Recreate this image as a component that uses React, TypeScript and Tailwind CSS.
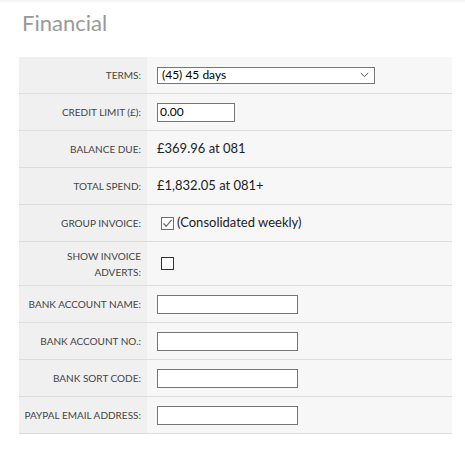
import { ReactNode } from "react";

type Row = {
  label: ReactNode;
  value: ReactNode;
  tall?: boolean;
};

const TextBox = ({ width, value }: { width: string; value?: string }) => (
  <div
    className={`${width} flex items-center h-[19px] px-[2px] bg-white border border-[#767676] text-[12px] text-black leading-none`}
  >
    {value}
  </div>
);

const Check = ({ checked }: { checked?: boolean }) => (
  <span
    className={`flex items-center justify-center w-[13px] h-[13px] ml-[4px] bg-white border ${
      checked ? "border-[#6d6d6d]" : "border-[#333]"
    }`}
  >
    {checked && (
      <svg width="11" height="11" viewBox="0 0 11 11" fill="none">
        <path d="M1.5 5.5 L4.2 8.3 L9.6 1.8" stroke="#6d6d6d" strokeWidth="1.3" />
      </svg>
    )}
  </span>
);

const rows: Row[] = [
  {
    label: "TERMS:",
    value: (
      <div className="flex items-center justify-between w-[218px] h-[17px] pl-[4px] pr-[5px] bg-white border border-[#767676] text-[12px] text-black leading-none">
        <span>(45) 45 days</span>
        <svg width="9" height="6" viewBox="0 0 9 6" fill="none">
          <path d="M0.8 1 L4.5 4.6 L8.2 1" stroke="#555" strokeWidth="1" />
        </svg>
      </div>
    ),
  },
  {
    label: "CREDIT LIMIT (£):",
    value: <TextBox width="w-[78px]" value="0.00" />,
  },
  { label: "BALANCE DUE:", value: <span>£369.96 at 081</span> },
  { label: "TOTAL SPEND:", value: <span>£1,832.05 at 081+</span> },
  {
    label: "GROUP INVOICE:",
    value: (
      <div className="flex items-center gap-[3px]">
        <Check checked />
        <span>(Consolidated weekly)</span>
      </div>
    ),
  },
  {
    label: (
      <>
        SHOW INVOICE
        <br />
        ADVERTS:
      </>
    ),
    value: <Check />,
    tall: true,
  },
  { label: "BANK ACCOUNT NAME:", value: <TextBox width="w-[141px]" /> },
  { label: "BANK ACCOUNT NO.:", value: <TextBox width="w-[141px]" /> },
  { label: "BANK SORT CODE:", value: <TextBox width="w-[141px]" /> },
  { label: "PAYPAL EMAIL ADDRESS:", value: <TextBox width="w-[141px]" /> },
];

const App = () => {
  return (
    <div className="w-[465px] h-[454px] bg-white border-t-2 border-[#f4f4f4] font-['Lato',sans-serif]">
      <div className="pl-[19px] pt-[8px]">
        <h1 className="ml-[3px] text-[22px] leading-[26px] text-[#999]">Financial</h1>

        {/* financial table */}
        <div className="w-[433px] mt-[21px]">
          {rows.map((row, i) => (
            <div
              key={i}
              className={`flex border-b border-[#dddddd] ${row.tall ? "h-[44px]" : "h-[37px]"}`}
            >
              <div className="flex items-center justify-end w-[128px] pr-[6px] bg-[#f0f0f0] text-right text-[10px] leading-[16px] text-[#444]">
                {row.label}
              </div>
              <div className="flex flex-1 items-center pl-[10px] bg-[#f7f7f7] text-[13px] text-[#222]">
                {row.value}
              </div>
            </div>
          ))}
        </div>
      </div>
    </div>
  );
};

export default App;
